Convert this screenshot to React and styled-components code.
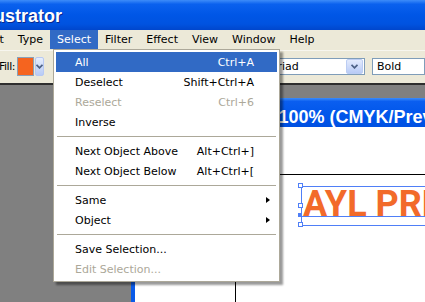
import React from 'react';
import styled, { createGlobalStyle } from 'styled-components';

const GlobalStyle = createGlobalStyle`
  html, body {
    margin: 0;
    padding: 0;
    overflow: hidden;
  }
  body {
    font-family: "DejaVu Sans", Verdana, sans-serif;
    font-size: 11px;
  }
`;

const beige = '#ECE9D8';
const menuBlue = '#316AC5';
const xpBorder = '#ACA899';
const orange = '#F26A2A';
const selBlue = '#4F7FF7';

const Screen = styled.div`
  position: relative;
  width: 425px;
  height: 302px;
  overflow: hidden;
  display: flex;
  flex-direction: column;
  background: #808080;
`;

const TitleBar = styled.div`
  height: 30px;
  flex: none;
  background: linear-gradient(
    #3d8cf9 0%,
    #0a61ee 14%,
    #0056e6 50%,
    #0053e0 80%,
    #0046cc 100%
  );
  color: #fff;
  font-family: "Liberation Sans", Arial, sans-serif;
  font-weight: bold;
  font-size: 18px;
  line-height: 30px;
  padding-top: 1px;
  box-sizing: border-box;
  white-space: nowrap;
  text-shadow: 1px 1px 0 #0a2a8f;
`;

const TitleText = styled.span`
  display: inline-block;
  margin-left: -82px;
`;

const MenuBar = styled.div`
  height: 20px;
  flex: none;
  background: ${beige};
  display: flex;
  white-space: nowrap;
`;

const MenuItem = styled.div`
  height: 19px;
  line-height: 19px;
  padding: 0 7px;
  color: ${(p) => (p.$active ? '#fff' : '#000')};
  background: ${(p) => (p.$active ? menuBlue : 'transparent')};
  &:first-child {
    margin-left: -39px;
  }
`;

const Toolbar = styled.div`
  flex: none;
  box-sizing: border-box;
  height: 35px;
  background: ${beige};
  border-top: 1px solid #f7f6ef;
  border-bottom: 2px solid #2e2e2e;
  display: flex;
  align-items: flex-start;
  padding-top: 6px;
  white-space: nowrap;
`;

const Label = styled.span`
  line-height: 19px;
  letter-spacing: -0.5px;
  margin: 0 2px 0 -1px;
`;

const Swatch = styled.div`
  width: 17px;
  height: 17px;
  border: 1px solid #8aa0b8;
  background: #f5641f;
`;

const DropButton = styled.div`
  width: 11px;
  height: 19px;
  margin-left: 1px;
  border: 1px solid #b7c9f3;
  border-radius: 2px;
  background: linear-gradient(#e6eefd, #b8cbf6);
  display: flex;
  align-items: center;
  justify-content: center;
  box-sizing: border-box;
`;

const Combo = styled.div`
  height: 17px;
  width: ${(p) => p.$w}px;
  margin-left: ${(p) => p.$ml}px;
  margin-top: 1px;
  border: 1px solid #7f9db9;
  background: #fff;
  display: flex;
  align-items: center;
  justify-content: space-between;
  box-sizing: border-box;
  padding: 1px;
  padding-left: 4px;
  line-height: 15px;
`;

const ComboButton = styled.div`
  width: 17px;
  height: 15px;
  border: 1px solid #bccdf3;
  border-radius: 2px;
  background: linear-gradient(#e3ebfd, #b9cbf6);
  box-sizing: border-box;
  display: flex;
  align-items: center;
  justify-content: center;
`;

const Chevron = () => (
  <svg width="7" height="5" viewBox="0 0 7 5">
    <path d="M0.5 0.8 L3.5 3.8 L6.5 0.8" fill="none" stroke="#4d6185" strokeWidth="1.8" />
  </svg>
);

const Workspace = styled.div`
  flex: 1;
  background: #808080;
  display: flex;
  padding: 13px 0 0 131px;
`;

const DocWindow = styled.div`
  flex: 1;
  display: flex;
  flex-direction: column;
  border-left: 4px solid #0a5ae8;
`;

const DocTitle = styled.div`
  height: 29px;
  flex: none;
  box-sizing: border-box;
  padding: 9px 0 0 33px;
  background: linear-gradient(#3b8cfb 0%, #0a5ef0 12%, #0056ea 60%, #0050e2 100%);
  color: #fff;
  font-family: "Liberation Sans", Arial, sans-serif;
  font-weight: bold;
  font-size: 18px;
  line-height: 20px;
  white-space: nowrap;
  overflow: hidden;
`;

const Canvas = styled.div`
  flex: 1;
  background: #fff;
  display: flex;
  padding: 47px 0 0 100px;
`;

const Artboard = styled.div`
  flex: 1;
  border-top: 1px solid #000;
  border-left: 1px solid #000;
  padding: 11px 0 0 65px;
`;

const TextBox = styled.div`
  position: relative;
  height: 38px;
  border: 1px solid ${selBlue};
  border-right: none;
  padding-left: 1px;
  white-space: nowrap;
  font-family: Roboto, "Liberation Sans", sans-serif;
  font-weight: bold;
  font-size: 36px;
  line-height: 34px;
  color: ${orange};
`;

const Baseline = styled.div`
  position: absolute;
  left: 0;
  right: 0;
  top: 29px;
  height: 1px;
  background: ${selBlue};
`;

const Handle = styled.div`
  position: absolute;
  left: -4px;
  top: ${(p) => p.$top}px;
  width: ${(p) => (p.$filled ? 4 : 5)}px;
  height: ${(p) => (p.$filled ? 4 : 5)}px;
  box-sizing: border-box;
  border: 1px solid ${selBlue};
  background: ${(p) => (p.$filled ? selBlue : '#fff')};
`;

const Menu = styled.div`
  position: absolute;
  left: 53px;
  top: 49px;
  width: 227px;
  box-sizing: border-box;
  background: #fff;
  border: 1px solid ${xpBorder};
  padding: 2px;
  box-shadow: 3px 3px 2px rgba(0, 0, 0, 0.4);
`;

const Row = styled.div`
  height: 20px;
  display: grid;
  grid-template-columns: 1fr auto 23px;
  align-items: center;
  padding-left: 19px;
  white-space: nowrap;
  background: ${(p) => (p.$active ? menuBlue : 'transparent')};
  color: ${(p) => (p.$active ? '#fff' : p.$disabled ? xpBorder : '#000')};
`;

const SubArrow = styled.span`
  justify-self: end;
  margin-right: 7px;
  width: 0;
  height: 0;
  border-top: 3.5px solid transparent;
  border-bottom: 3.5px solid transparent;
  border-left: 4px solid #000;
`;

const Separator = styled.div`
  height: 9px;
  display: flex;
  align-items: center;
  padding: 0 1px;
  &::after {
    content: '';
    flex: 1;
    height: 1px;
    background: ${xpBorder};
  }
`;

const menuBar = ['Object', 'Type', 'Select', 'Filter', 'Effect', 'View', 'Window', 'Help'];

const menu = [
  { label: 'All', key: 'Ctrl+A', active: true },
  { label: 'Deselect', key: 'Shift+Ctrl+A' },
  { label: 'Reselect', key: 'Ctrl+6', disabled: true },
  { label: 'Inverse' },
  'sep',
  { label: 'Next Object Above', key: 'Alt+Ctrl+]' },
  { label: 'Next Object Below', key: 'Alt+Ctrl+[' },
  'sep',
  { label: 'Same', sub: true },
  { label: 'Object', sub: true },
  'sep',
  { label: 'Save Selection...' },
  { label: 'Edit Selection...', disabled: true },
];

export default function App() {
  return (
    <>
      <GlobalStyle />
      <Screen>
        <TitleBar>
          <TitleText>Adobe Illustrator</TitleText>
        </TitleBar>
        <MenuBar>
          {menuBar.map((m) => (
            <MenuItem key={m} $active={m === 'Select'}>
              {m}
            </MenuItem>
          ))}
        </MenuBar>
        <Toolbar>
          <Label>Fill:</Label>
          <Swatch />
          <DropButton>
            <Chevron />
          </DropButton>
          <Combo $w={124} $ml={212}>
            <span>Myriad</span>
            <ComboButton>
              <Chevron />
            </ComboButton>
          </Combo>
          <Combo $w={60} $ml={7}>
            <span>Bold</span>
          </Combo>
        </Toolbar>
        <Workspace>
          <DocWindow>
            <DocTitle>Untitled-1 @ 100% (CMYK/Preview)</DocTitle>
            <Canvas>
              <Artboard>
                <TextBox>
                  AYL PRESS
                  <Baseline />
                  <Handle $top={-4} />
                  <Handle $top={16} />
                  <Handle $top={26} $filled />
                  <Handle $top={35} />
                </TextBox>
              </Artboard>
            </Canvas>
          </DocWindow>
        </Workspace>
        <Menu>
          {menu.map((item, i) =>
            item === 'sep' ? (
              <Separator key={i} />
            ) : (
              <Row key={i} $active={item.active} $disabled={item.disabled}>
                <span>{item.label}</span>
                <span>{item.key}</span>
                {item.sub ? <SubArrow /> : <span />}
              </Row>
            )
          )}
        </Menu>
      </Screen>
    </>
  );
}
